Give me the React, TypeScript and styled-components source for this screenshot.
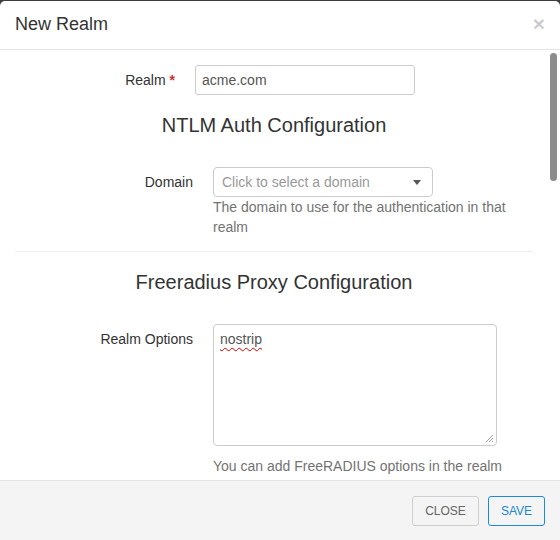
import React from 'react';
import styled, { createGlobalStyle } from 'styled-components';

const GlobalStyle = createGlobalStyle`
  * { box-sizing: border-box; }
  html, body { margin: 0; padding: 0; height: 100%; overflow: hidden; background: #3d3d3d; }
  body { font-family: "Liberation Sans", Arial, sans-serif; font-size: 14px; color: #333; }
`;

const Modal = styled.div`
  margin-top: 1px;
  height: 539px;
  background: #fff;
  border-radius: 5px 5px 0 0;
  display: flex;
  flex-direction: column;
  overflow: hidden;
`;

const Header = styled.div`
  flex: none;
  height: 49px;
  padding: 0 15px;
  border-bottom: 1px solid #e5e5e5;
  display: flex;
  align-items: center;
  justify-content: space-between;
`;

const Title = styled.h4`
  margin: 0;
  font-size: 18px;
  font-weight: normal;
  line-height: 1.1;
  color: #333;
`;

const CloseX = styled.button`
  border: 0;
  background: none;
  padding: 0;
  margin-top: -3px;
  font-family: inherit;
  font-size: 21px;
  font-weight: bold;
  line-height: 1;
  color: #000;
  opacity: 0.2;
  cursor: pointer;
`;

const BodyWrap = styled.div`
  position: relative;
  flex: 1;
  min-height: 0;
  display: flex;
`;

const Body = styled.div`
  flex: 1;
  overflow-y: scroll;
  padding-right: 12px;
  scrollbar-width: none;
  &::-webkit-scrollbar { display: none; }
`;

const ScrollThumb = styled.div`
  position: absolute;
  top: 3px;
  right: 3px;
  width: 7px;
  height: 128px;
  border-radius: 4px;
  background: #8c8c8c;
`;

const Form = styled.form`
  padding: 15px 0 40px;
`;

const Row = styled.div<{ $label: number; $field: number }>`
  display: grid;
  grid-template-columns: ${(p) => p.$label}px ${(p) => p.$field}px;
  column-gap: 20px;
  padding: 0 15px;
  align-items: start;
  & + & { margin-top: 15px; }
`;

const Label = styled.label`
  text-align: right;
  padding-top: 5px;
  line-height: 20px;
  color: #333;
`;

const Req = styled.span`
  color: #c9302c;
  font-weight: bold;
`;

const Field = styled.div`
  display: flex;
  flex-direction: column;
  align-items: flex-start;
`;

const TextInput = styled.input`
  width: 220px;
  height: 30px;
  padding: 0 6px;
  border: 1px solid #ccc;
  border-radius: 3px;
  font-family: inherit;
  font-size: 14px;
  color: #555;
  background: #fff;
`;

const Select = styled.div<{ $width?: number }>`
  width: ${(p) => p.$width ?? 220}px;
  height: 30px;
  padding: 0 11px 0 8px;
  border: 1px solid #ccc;
  border-radius: 4px;
  display: flex;
  align-items: center;
  justify-content: space-between;
  color: #999;
  background: #fff;
  cursor: pointer;
`;

const Caret = styled.span`
  width: 0;
  height: 0;
  border-left: 4px solid transparent;
  border-right: 4px solid transparent;
  border-top: 5px solid #555;
`;

const Help = styled.p<{ $gap?: number }>`
  margin: ${(p) => p.$gap ?? 0}px 0 0;
  line-height: 20px;
  color: #737373;
`;

const SectionTitle = styled.h4`
  margin: 19px 0 31px;
  text-align: center;
  font-size: 20px;
  font-weight: normal;
  line-height: 22px;
  color: #333;
`;

const Divider = styled.hr`
  margin: 14px 15px 0;
  border: 0;
  border-top: 1px solid #eee;
`;

const TextArea = styled.div`
  position: relative;
  width: 284px;
  height: 122px;
  padding: 4px 6px;
  border: 1px solid #ccc;
  border-radius: 4px;
  line-height: 20px;
  color: #555;
  background: #fff;
`;

const Misspelled = styled.span`
  text-decoration: underline wavy #d40000;
  text-decoration-thickness: 1px;
  text-underline-offset: 3px;
`;

const Grip = styled.svg`
  position: absolute;
  right: 2px;
  bottom: 2px;
`;

const Check = styled.span`
  display: inline-block;
  width: 16px;
  height: 16px;
  margin-top: 7px;
  border: 1px solid #bbb;
  border-radius: 3px;
  background: #fff;
`;

const Footer = styled.div`
  flex: none;
  height: 60px;
  padding: 0 15px;
  border-top: 1px solid #e5e5e5;
  background: #f4f4f4;
  display: flex;
  align-items: center;
  justify-content: flex-end;
  gap: 9px;
`;

const Btn = styled.button<{ $primary?: boolean }>`
  height: 30px;
  padding: 0 12px;
  border-radius: 3px;
  border: 1px solid ${(p) => (p.$primary ? '#1c8ad8' : '#cfcfcf')};
  background: transparent;
  color: ${(p) => (p.$primary ? '#1a87d4' : '#666')};
  font-family: inherit;
  font-size: 12px;
  text-transform: uppercase;
  cursor: pointer;
`;

const extraSelects: { label: string; placeholder: string; help?: string }[] = [
  { label: 'RADIUS AUTH', placeholder: 'Click to add a server', help: 'The RADIUS Server(s) to proxy authentication' },
  { label: 'Type', placeholder: 'Click to select a type', help: 'Home server pool type' },
  { label: 'RADIUS ACCT', placeholder: 'Click to add a server', help: 'The RADIUS Server(s) to proxy accounting' },
  { label: 'Type', placeholder: 'Click to select a type', help: 'Home server pool type' },
];

const stripRows = [
  'Strip on the portal',
  'Strip on the admin',
  'Strip in RADIUS authorization',
  'Custom attributes',
];

export default function App() {
  return (
    <>
      <GlobalStyle />
      <Modal>
        <Header>
          <Title>New Realm</Title>
          <CloseX aria-label="Close">×</CloseX>
        </Header>
        <BodyWrap>
          <Body>
            <Form>
              <Row $label={160} $field={220}>
                <Label>
                  Realm <Req>*</Req>
                </Label>
                <TextInput defaultValue="acme.com" />
              </Row>

              <SectionTitle>NTLM Auth Configuration</SectionTitle>

              <Row $label={178} $field={320}>
                <Label>Domain</Label>
                <Field>
                  <Select>
                    <span>Click to select a domain</span>
                    <Caret />
                  </Select>
                  <Help>The domain to use for the authentication in that realm</Help>
                </Field>
              </Row>

              <Divider />
              <SectionTitle>Freeradius Proxy Configuration</SectionTitle>

              <Row $label={178} $field={320}>
                <Label>Realm Options</Label>
                <Field>
                  <TextArea>
                    <Misspelled>nostrip</Misspelled>
                    <Grip width="9" height="9" viewBox="0 0 9 9">
                      <path d="M8 1 L1 8 M8 4 L4 8 M8 7 L7 8" stroke="#999" strokeWidth="1" />
                    </Grip>
                  </TextArea>
                  <Help $gap={10}>You can add FreeRADIUS options in the realm definition</Help>
                </Field>
              </Row>
              {extraSelects.map((s, i) => (
                <Row key={i} $label={178} $field={320}>
                  <Label>{s.label}</Label>
                  <Field>
                    <Select>
                      <span>{s.placeholder}</span>
                      <Caret />
                    </Select>
                    {s.help && <Help>{s.help}</Help>}
                  </Field>
                </Row>
              ))}
              <Row $label={178} $field={320}>
                <Label>Authorize from PacketFence</Label>
                <Field>
                  <Check />
                  <Help $gap={5}>Should we forward the request to PacketFence to have a dynamic answer or do we use the remote proxy server answered attributes?</Help>
                </Field>
              </Row>

              <Divider />
              <SectionTitle>Stripping Configuration</SectionTitle>

              {stripRows.map((r) => (
                <Row key={r} $label={178} $field={320}>
                  <Label>{r}</Label>
                  <Field>
                    <Check />
                    <Help $gap={5}>Should the usernames matching this realm be stripped when used here</Help>
                  </Field>
                </Row>
              ))}
            </Form>
          </Body>
          <ScrollThumb />
        </BodyWrap>
        <Footer>
          <Btn>Close</Btn>
          <Btn $primary>Save</Btn>
        </Footer>
      </Modal>
    </>
  );
}
